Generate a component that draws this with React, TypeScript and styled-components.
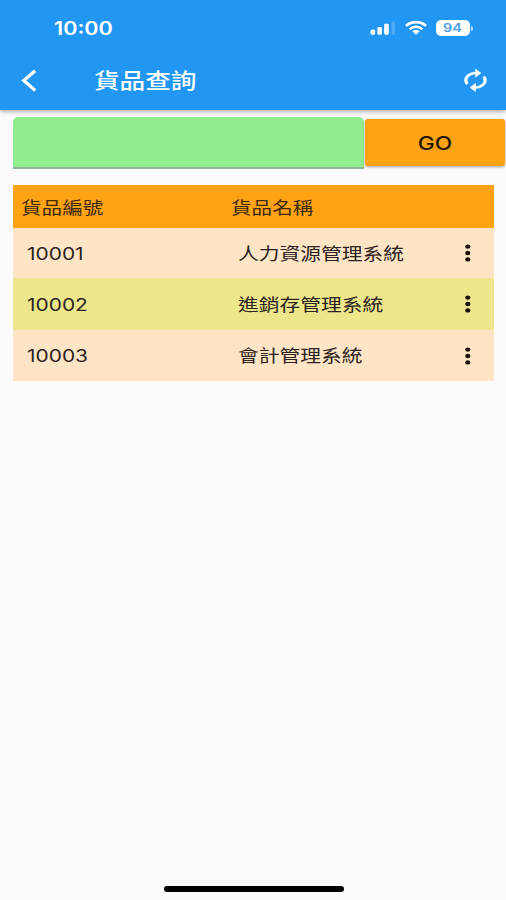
import React from 'react';
import styled, { createGlobalStyle } from 'styled-components';

const Global = createGlobalStyle`
  * { box-sizing: border-box; }
  body {
    margin: 0;
    background: #fcfafc;
    font-family: Inter, "Noto Sans CJK TC", sans-serif;
  }
`;

const Screen = styled.div`
  width: 506px;
  height: 900px;
  display: flex;
  flex-direction: column;
  background: #fcfafc;
  overflow: hidden;
`;

const Header = styled.header`
  height: 109.5px;
  flex: none;
  background: #2196f3;
  color: #fff;
  box-shadow: 0 1px 5px rgba(0, 0, 0, 0.4);
`;

const StatusBar = styled.div`
  height: 56px;
  display: flex;
  align-items: center;
  padding: 0 33px 0 54px;
`;

const Clock = styled.div`
  display: flex;
  padding-top: 2px;
`;

const StatusIcons = styled.div`
  display: flex;
  align-items: center;
  margin-left: auto;
  gap: 9px;
`;

const Battery = styled.div`
  display: flex;
  align-items: center;
  gap: 1px;
`;

const BatteryBody = styled.div`
  width: 34px;
  height: 16px;
  padding-top: 1px;
  border-radius: 5px;
  background: #fff;
  color: #4a9fe6;
  display: flex;
  align-items: center;
  justify-content: center;
`;

const BatteryTip = styled.div`
  width: 2px;
  height: 5px;
  border-radius: 0 2px 2px 0;
  background: rgba(255, 255, 255, 0.7);
`;

const TitleBar = styled.div`
  height: 49px;
  display: flex;
  align-items: center;
  padding: 0 14.5px 0 20px;
`;

const BackButton = styled.button`
  display: flex;
  width: 74px;
  padding: 0;
  border: 0;
  background: none;
`;

const RefreshButton = styled(BackButton)`
  width: 33px;
  margin-left: auto;
`;

const Label = styled.span<{ $size: number; $stretch: number; $weight?: number; $center?: boolean }>`
  display: inline-block;
  white-space: nowrap;
  line-height: 1;
  font-size: ${p => p.$size}px;
  font-weight: ${p => p.$weight ?? 400};
  transform: scaleX(${p => p.$stretch});
  transform-origin: ${p => (p.$center ? 'center' : 'left')} center;
`;

const SearchRow = styled.div`
  display: flex;
  align-items: flex-start;
  gap: 1.5px;
  height: 52px;
  margin: 7.5px 1px 0 13px;
`;

const SearchInput = styled.input`
  width: 350.5px;
  height: 52px;
  padding: 0 14px;
  border: 0;
  border-bottom: 2px solid #8fb592;
  border-radius: 5px 5px 0 0;
  background: #90ee90;
  font-size: 18px;
  outline: none;
`;

const GoButton = styled.button`
  flex: 1;
  height: 47px;
  margin-top: 2px;
  padding: 1px 0 0;
  border: 0;
  border-radius: 3px;
  background: #ffa314;
  color: #241703;
  font-family: inherit;
  box-shadow: 0 1px 3px rgba(0, 0, 0, 0.38);
`;

const Table = styled.div`
  margin: 16px 12.5px 0 13px;
  color: #2b2420;
`;

const TableHead = styled.div`
  display: grid;
  grid-template-columns: 210.5px 1fr;
  align-items: center;
  height: 42.5px;
  padding: 1px 0 0 7.5px;
  background: #ffa314;
  color: #3d2a0c;
`;

const TableRow = styled.div<{ $alt: boolean }>`
  display: grid;
  grid-template-columns: 210.5px 1fr 16px;
  align-items: center;
  height: ${p => (p.$alt ? 52 : 50.75)}px;
  padding: 0 18px 0 14px;
  background: ${p => (p.$alt ? '#ede68b' : '#ffe4c6')};
`;

const Cell = styled.div`
  padding-top: 1.5px;
`;

const MoreButton = styled.button`
  display: flex;
  padding: 0;
  border: 0;
  background: none;
`;

const HomeIndicator = styled.div`
  width: 180px;
  height: 6px;
  margin: auto 0 8px 164px;
  border-radius: 3px;
  background: #000;
`;

const SignalIcon = () => (
  <svg width="26" height="16" viewBox="0 0 26 16" fill="#fff">
    <rect x="0.5" y="9.5" width="4.6" height="5.3" rx="1.5" />
    <rect x="7.4" y="7" width="4.6" height="7.8" rx="1.4" />
    <rect x="14.2" y="3.7" width="4.6" height="11.1" rx="1.4" />
    <rect x="21.5" y="1.5" width="3.6" height="13.3" rx="1.4" opacity="0.2" />
  </svg>
);

const WifiIcon = () => (
  <svg width="22" height="16" viewBox="0 0 22 16" fill="none" stroke="#fff" strokeWidth="2.6">
    <path d="M1 5.8C6.5 0.9 15.5 0.9 21 5.8" />
    <path d="M4.7 9.2C8.5 6 13.5 6 17.3 9.2" />
    <path d="M7.4 11.3Q11 8.4 14.6 11.3L11 14.8Z" fill="#fff" stroke="none" />
  </svg>
);

const BackIcon = () => (
  <svg width="18" height="24" viewBox="0 0 18 24" fill="none" stroke="#fff" strokeWidth="3.3">
    <path d="M15.2 1.8L3.8 11.6L15.2 21.4" />
  </svg>
);

const RefreshIcon = () => (
  <svg width="33" height="24.6" viewBox="0 0 24 24" preserveAspectRatio="none" fill="#fff" stroke="#fff" strokeWidth="0.4">
    <path d="M12 6v3l4-4-4-4v3c-4.42 0-8 3.58-8 8 0 1.57.46 3.03 1.24 4.26L6.7 14.8c-.45-.83-.7-1.79-.7-2.8 0-3.31 2.69-6 6-6zm6.76 1.74L17.3 9.2c.44.84.7 1.79.7 2.8 0 3.31-2.69 6-6 6v-3l-4 4 4 4v-3c4.42 0 8-3.58 8-8 0-1.57-.46-3.03-1.24-4.26z" />
  </svg>
);

const MoreIcon = () => (
  <svg width="16" height="20" viewBox="0 0 16 20" fill="#1c130c">
    <ellipse cx="7.8" cy="3.6" rx="2.6" ry="2.2" />
    <ellipse cx="7.8" cy="10" rx="2.6" ry="2.2" />
    <ellipse cx="7.8" cy="16.4" rx="2.6" ry="2.2" />
  </svg>
);

const items = [
  { code: '10001', name: '人力資源管理系統' },
  { code: '10002', name: '進銷存管理系統' },
  { code: '10003', name: '會計管理系統' },
];

export default function App() {
  return (
    <Screen>
      <Global />
      <Header>
        <StatusBar>
          <Clock><Label $size={18} $stretch={1.2} $weight={600}>10:00</Label></Clock>
          <StatusIcons>
            <SignalIcon />
            <WifiIcon />
            <Battery>
              <BatteryBody>
                <Label $size={11.5} $stretch={1.25} $weight={600} $center>94</Label>
              </BatteryBody>
              <BatteryTip />
            </Battery>
          </StatusIcons>
        </StatusBar>
        <TitleBar>
          <BackButton aria-label="返回"><BackIcon /></BackButton>
          <Label $size={21} $stretch={1.22} $weight={500}>貨品查詢</Label>
          <RefreshButton aria-label="重新整理"><RefreshIcon /></RefreshButton>
        </TitleBar>
      </Header>
      <SearchRow>
        <SearchInput />
        <GoButton>
          <Label $size={18.5} $stretch={1.23} $weight={500} $center>GO</Label>
        </GoButton>
      </SearchRow>
      <Table>
        <TableHead>
          <Cell><Label $size={17} $stretch={1.21}>貨品編號</Label></Cell>
          <Cell><Label $size={17} $stretch={1.21}>貨品名稱</Label></Cell>
        </TableHead>
        {items.map((item, i) => (
          <TableRow key={item.code} $alt={i % 2 === 1}>
            <Cell><Label $size={17} $stretch={1.23}>{item.code}</Label></Cell>
            <Cell><Label $size={17} $stretch={1.22}>{item.name}</Label></Cell>
            <MoreButton aria-label="更多"><MoreIcon /></MoreButton>
          </TableRow>
        ))}
      </Table>
      <HomeIndicator />
    </Screen>
  );
}
